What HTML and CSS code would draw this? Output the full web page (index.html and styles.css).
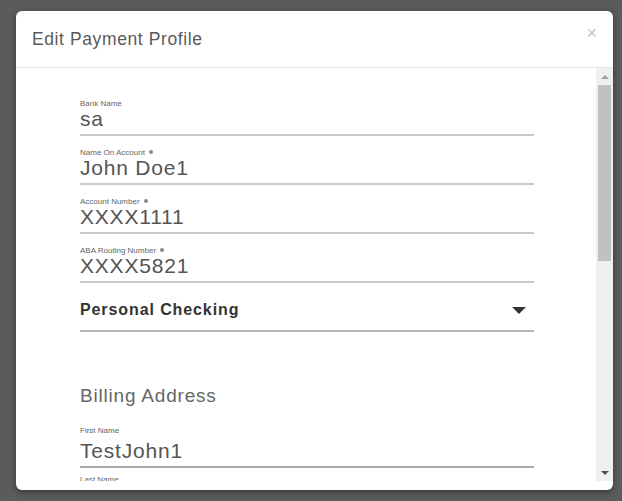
FILE: index.html
```html
<!DOCTYPE html>
<html>
<head>
<meta charset="utf-8">
<link rel="stylesheet" href="styles.css">
</head>
<body>
<div class="backdrop">
  <div class="modal">
    <div class="modal-header">
      <h2 class="modal-title">Edit Payment Profile</h2>
      <span class="close">&times;</span>
    </div>
    <div class="modal-body">
      <div class="scroll-area">
        <form class="form">
          <div class="field">
            <label class="field-label">Bank Name</label>
            <div class="field-value">sa</div>
          </div>
          <div class="field">
            <label class="field-label">Name On Account <span class="req"></span></label>
            <div class="field-value">John Doe1</div>
          </div>
          <div class="field">
            <label class="field-label">Account Number <span class="req"></span></label>
            <div class="field-value">XXXX1111</div>
          </div>
          <div class="field">
            <label class="field-label">ABA Routing Number <span class="req"></span></label>
            <div class="field-value">XXXX5821</div>
          </div>
          <div class="select">
            <span class="select-text">Personal Checking</span>
            <span class="caret"></span>
          </div>
          <h3 class="section-title">Billing Address</h3>
          <div class="field field-active">
            <label class="field-label">First Name</label>
            <div class="field-value">TestJohn1</div>
          </div>
          <div class="field">
            <label class="field-label">Last Name</label>
            <div class="field-value">Doe</div>
          </div>
        </form>
      </div>
      <div class="scrollbar">
        <div class="sb-btn sb-up"></div>
        <div class="sb-track"><div class="sb-thumb"></div></div>
        <div class="sb-btn sb-down"></div>
      </div>
    </div>
    <div class="modal-foot"></div>
  </div>
</div>
</body>
</html>
```

FILE: styles.css
```css
html, body {
  margin: 0;
  padding: 0;
  height: 100%;
}
body {
  background: #5b5b5b;
  font-family: "Liberation Sans", Arial, sans-serif;
  overflow: hidden;
}
.backdrop {
  padding: 11px 9px 0 16px;
}
.modal {
  width: 597px;
  height: 479px;
  background: #fff;
  border-radius: 6px;
  overflow: hidden;
  display: flex;
  flex-direction: column;
  box-shadow: 0 2px 6px rgba(0,0,0,0.4);
}
.modal-header {
  height: 56px;
  border-bottom: 1px solid #e5e5e5;
  display: flex;
  align-items: center;
  justify-content: space-between;
  padding: 0 16px;
  flex: none;
}
.modal-title {
  margin: 0;
  font-size: 17.5px;
  font-weight: normal;
  color: #5a5a5a;
  letter-spacing: 0.6px;
}
.close {
  color: #c4c4c4;
  font-size: 18px;
  margin-top: -12px;
  margin-right: 0;
}
.modal-body {
  flex: none;
  height: 413px;
  display: flex;
}
.scroll-area {
  flex: 1;
  overflow: hidden;
  padding-left: 64px;
}
.form {
  width: 454px;
  padding-top: 31px;
}
.field {
  border-bottom: 2px solid #c9c9c9;
  margin-bottom: 12px;
}
.field-label {
  display: block;
  font-size: 8px;
  line-height: 10px;
  color: #666;
  height: 10px;
}
.req {
  display: inline-block;
  width: 4px;
  height: 4px;
  border-radius: 50%;
  background: #888;
  margin-left: 2px;
  vertical-align: 1px;
}
.field-value {
  font-size: 21px;
  line-height: 20px;
  height: 25px;
  color: #555;
  letter-spacing: 0.8px;
}
.field-active {
  border-bottom-color: #a8a8a8;
  margin-bottom: 7px;
}
.field-active .field-label {
  height: 14px;
  line-height: 8px;
}
.select {
  height: 35px;
  border-bottom: 2px solid #b5b5b5;
  display: flex;
  align-items: center;
  justify-content: space-between;
}
.select-text {
  font-size: 16px;
  font-weight: bold;
  color: #333;
  letter-spacing: 0.9px;
  margin-top: -5px;
}
.caret {
  width: 0;
  height: 0;
  border-left: 7px solid transparent;
  border-right: 7px solid transparent;
  border-top: 7px solid #333;
  margin-right: 8px;
  margin-top: -5px;
}
.section-title {
  margin: 52px 0 19px;
  font-size: 19px;
  font-weight: normal;
  color: #666;
  line-height: 24px;
  letter-spacing: 0.8px;
}
.scrollbar {
  width: 17px;
  flex: none;
  background: #f0f0f0;
  display: flex;
  flex-direction: column;
}
.sb-btn {
  height: 17px;
  flex: none;
  display: flex;
  align-items: center;
  justify-content: center;
}
.sb-up::after {
  content: "";
  border-left: 4px solid transparent;
  border-right: 4px solid transparent;
  border-bottom: 4px solid #a3a3a3;
}
.sb-down::after {
  content: "";
  border-left: 4px solid transparent;
  border-right: 4px solid transparent;
  border-top: 4px solid #505050;
}
.sb-track {
  flex: 1;
  padding: 0 2px;
}
.sb-thumb {
  height: 176px;
  background: #c1c1c1;
}
.modal-foot {
  flex: 1;
}
```
